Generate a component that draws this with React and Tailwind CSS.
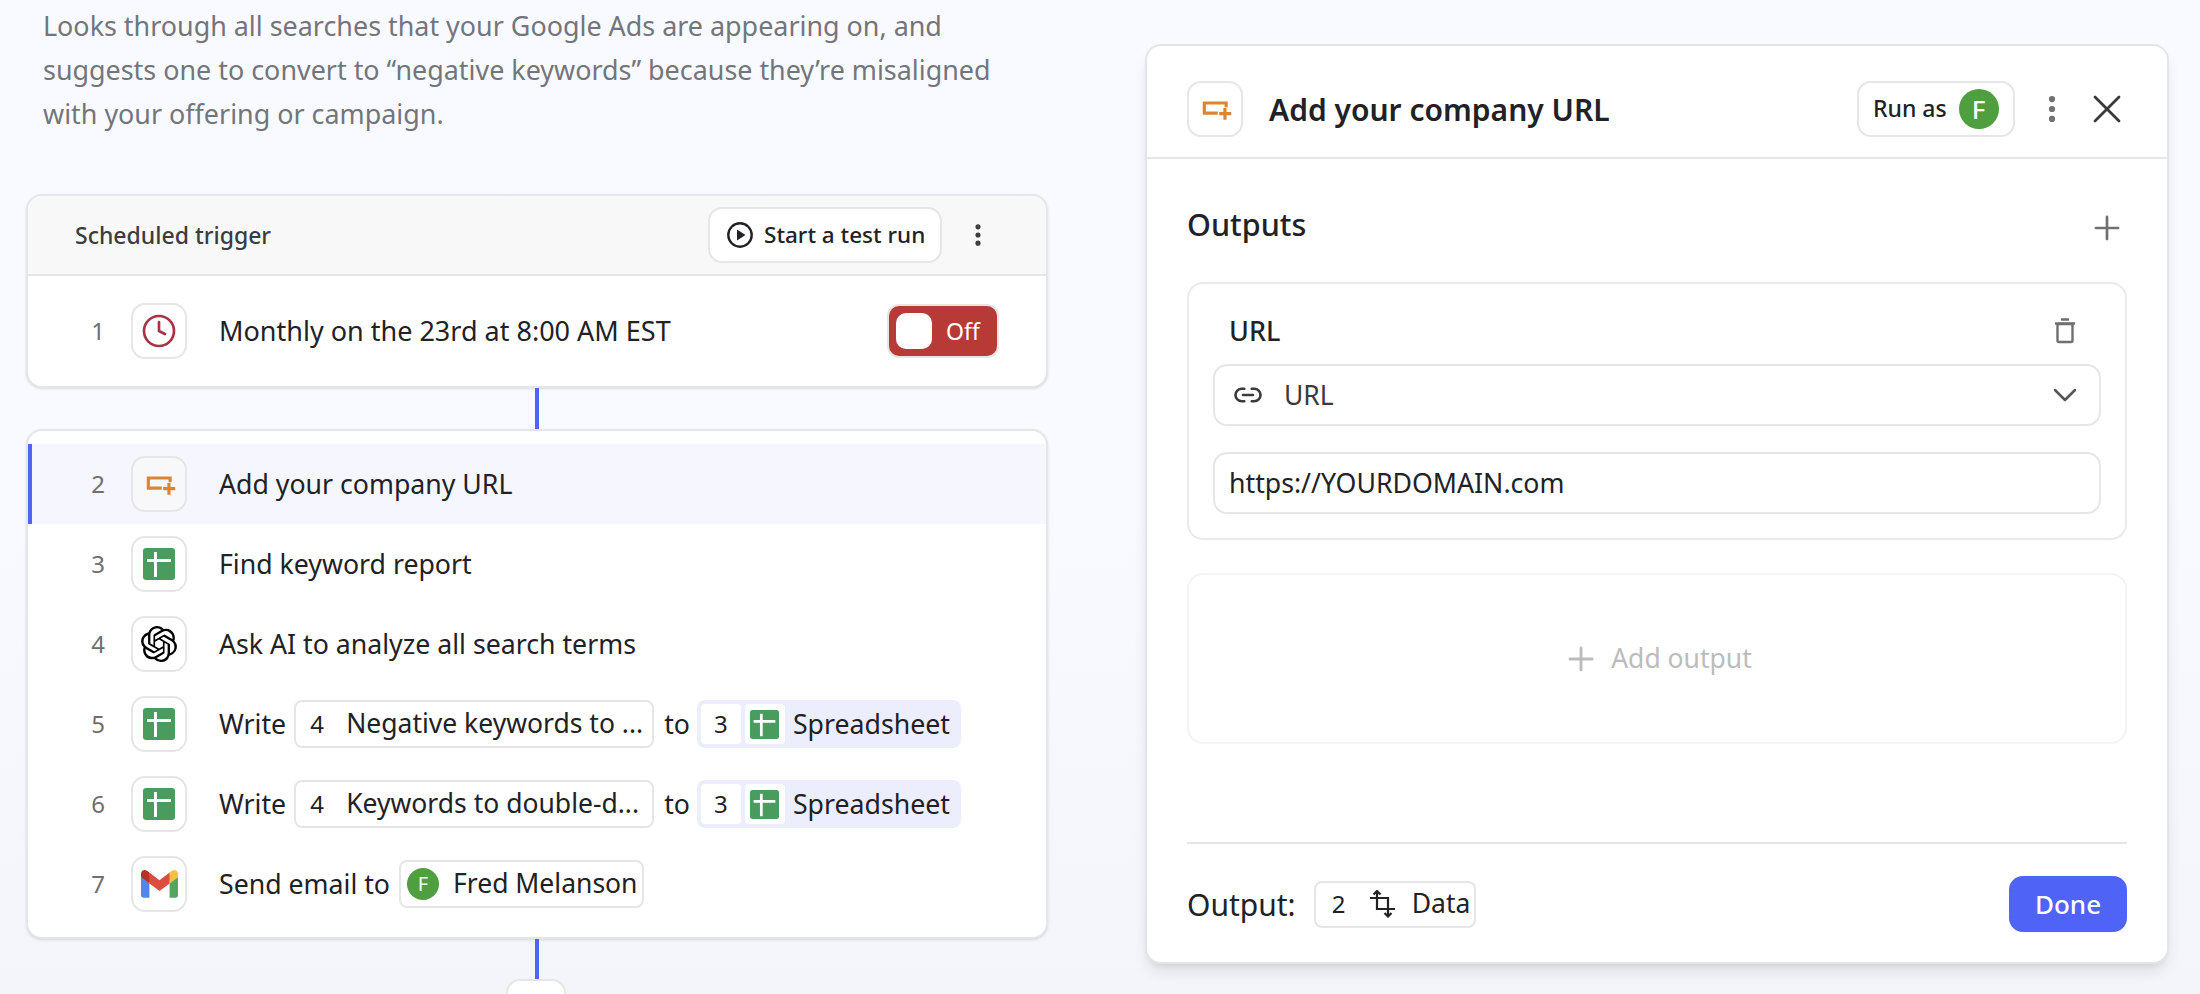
import { Clock, EllipsisVertical, X, Plus, Link2, ChevronDown } from 'lucide-react';
import { SiOpenai } from 'react-icons/si';

const AddIcon = () => (
  <svg viewBox="0 0 56 56" className="w-full h-full" fill="none" stroke="#de8431" strokeWidth="3.4">
    <path d="M31 32.5H16.5V21.5H40V26" />
    <path d="M32.5 33H45.5M38.7 27V39.5" />
  </svg>
);

const SheetIcon = ({ size = 'w-8 h-8' }) => (
  <svg viewBox="0 0 32 32" className={size}>
    <rect width="32" height="32" rx="3" fill="#4a9c5e" />
    <path d="M4 12.5H28M12.5 4V29" stroke="#fff" strokeWidth="3" fill="none" />
  </svg>
);

const GmailIcon = () => (
  <svg viewBox="0 0 256 193" className="w-[37px] h-[28px]">
    <path fill="#5086f0" d="M58.182 192.05V93.14L27.507 65.077 0 49.504v125.091c0 9.658 7.825 17.455 17.455 17.455h40.727Z" />
    <path fill="#55a45f" d="M197.818 192.05h40.727c9.659 0 17.455-7.826 17.455-17.455V49.505l-31.156 17.837-27.026 25.798v98.91Z" />
    <path fill="#dc4d3f" d="m58.182 93.14-4.174-38.647 4.174-36.989L128 69.868l69.818-52.364 4.669 34.992-4.669 40.644L128 145.504z" />
    <path fill="#f4c142" d="M197.818 17.504V93.14L256 49.504V26.231c0-21.585-24.64-33.89-41.89-20.945l-16.292 12.218Z" />
    <path fill="#b83028" d="M0 49.504l26.759 20.07L58.182 93.14V17.504L41.89 5.286C24.61-7.66 0 4.646 0 26.23v23.273Z" />
  </svg>
);

const DataIcon = () => (
  <svg viewBox="0 0 26 28" className="w-[26px] h-[28px]" fill="none" stroke="#222" strokeWidth="2.2">
    <path d="M0 8H18V26M14.5 23L18 26.5L21.5 23" />
    <path d="M7 1V19H25M3.5 4.5L7 1L10.5 4.5" />
  </svg>
);

const PlayIcon = () => (
  <svg viewBox="0 0 28 28" className="w-7 h-7" fill="none">
    <circle cx="14" cy="14" r="11.7" stroke="#212126" strokeWidth="2.4" />
    <path d="M11 8.5L19.5 14L11 19.5Z" fill="#212126" />
  </svg>
);

const TrashIcon = () => (
  <svg viewBox="0 0 22 26" className="w-[22px] h-[26px]" fill="none" stroke="#6f6f6f" strokeWidth="2.4">
    <path d="M1 5.5H21M7 1.5H15" />
    <rect x="3.5" y="6" width="15" height="18" rx="1.5" />
  </svg>
);

const IconBox = ({ children, className = 'bg-white' }) => (
  <div className={`w-14 h-14 rounded-[14px] border-2 border-[#e6e6e6] flex items-center justify-center shrink-0 ${className}`}>
    {children}
  </div>
);

const Step = ({ num, icon, active, boxClass, children }) => (
  <div className={`h-20 flex items-center border-l-4 ${active ? 'border-[#4f63f6] bg-[#f5f6fe]' : 'border-transparent'}`}>
    <span className="w-[73px] text-right text-[#6f6f6f] text-[24px] shrink-0">{num}</span>
    <div className="ml-[26px]">
      <IconBox className={boxClass}>{icon}</IconBox>
    </div>
    <div className="ml-[32px] flex items-center text-[#212126] text-[26.7px] whitespace-nowrap">{children}</div>
  </div>
);

const Chip = ({ num, children }) => (
  <span className="h-12 w-[360px] ml-[8px] rounded-[8px] border-2 border-[#e6e6e6] bg-white flex items-center pl-[14px] text-[26.5px]">
    <span className="w-[36px] text-[24px]">{num}</span>
    {children}
  </span>
);

const SheetChip = () => (
  <span className="ml-[7px] w-[264px] h-12 rounded-[8px] bg-[#eceefd] flex items-center pl-1 gap-1">
    <span className="w-10 h-10 bg-white rounded-[4px] flex items-center justify-center text-[24px]">3</span>
    <span className="w-10 h-10 bg-white rounded-[4px] flex items-center justify-center">
      <SheetIcon size="w-[29px] h-[29px]" />
    </span>
    <span className="ml-[4px]">Spreadsheet</span>
  </span>
);

export default function App() {
  return (
    <div
      className="w-[2200px] h-[994px] overflow-hidden flex bg-gradient-to-b from-[#f9faff] via-[#f9faff] to-[#f4f5fa] text-[#212126]"
      style={{ fontFamily: '"Noto Sans", sans-serif' }}
    >
      {/* left column */}
      <div className="w-[1120px] shrink-0 pl-[26px] pt-[4px]">
        <p className="w-[1000px] ml-[17px] text-[26.9px] leading-[44px] text-[#73757c]">
          Looks through all searches that your Google Ads are appearing on, and<br />
          suggests one to convert to “negative keywords” because they’re misaligned<br />
          with your offering or campaign.
        </p>

        <div className="mt-[58px] w-[1022px] rounded-[16px] border-2 border-[#e6e6e8] bg-white shadow-sm overflow-hidden">
          <div className="h-[80px] bg-[#f8f8f9] border-b-2 border-[#e6e6e8] flex items-center pl-[47px]">
            <span className="text-[23px] font-medium text-[#3c3c40]">Scheduled trigger</span>
            <button className="ml-auto w-[234px] h-[56px] rounded-[14px] border-2 border-[#e6e6e6] bg-white flex items-center pl-[16px] gap-[10px] text-[22.5px] font-medium">
              <PlayIcon />
              Start a test run
            </button>
            <EllipsisVertical size={28} strokeWidth={2.4} className="ml-[22px] mr-[54px] text-[#3c3c40]" />
          </div>
          <div className="h-[110px] flex items-center border-l-4 border-transparent">
            <span className="w-[73px] text-right text-[#6f6f6f] text-[24px] shrink-0">1</span>
            <div className="ml-[26px]">
              <IconBox><Clock size={36} strokeWidth={1.8} className="text-[#a83246]" /></IconBox>
            </div>
            <span className="ml-[32px] text-[27px]">Monthly on the 23rd at 8:00 AM EST</span>
            <div className="ml-auto mr-[47px] w-[112px] h-[54px] rounded-[12px] bg-[#b83a36] border-2 border-[#e6e6e6] flex items-center pl-[7px] text-white text-[23px]">
              <span className="w-[36px] h-[36px] rounded-[10px] bg-white" />
              <span className="ml-[14px]">Off</span>
            </div>
          </div>
        </div>

        <div className="ml-[509px] w-1 h-[41px] bg-[#4f63f6]" />

        <div className="w-[1022px] h-[510px] rounded-[16px] border-2 border-[#e6e6e8] bg-white shadow-sm pt-[13px] overflow-hidden">
          <Step num="2" active boxClass="bg-[#f8f8fb]" icon={<AddIcon />}>Add your company URL</Step>
          <Step num="3" icon={<SheetIcon />}>Find keyword report</Step>
          <Step num="4" icon={<SiOpenai size={36} color="#000" />}>Ask AI to analyze all search terms</Step>
          <Step num="5" icon={<SheetIcon />}>
            Write
            <Chip num="4">Negative keywords to ...</Chip>
            <span className="ml-[10px]">to</span>
            <SheetChip />
          </Step>
          <Step num="6" icon={<SheetIcon />}>
            Write
            <Chip num="4">Keywords to double-d...</Chip>
            <span className="ml-[10px]">to</span>
            <SheetChip />
          </Step>
          <Step num="7" icon={<GmailIcon />}>
            Send email to
            <span className="ml-[9px] w-[245px] h-12 rounded-[8px] border-2 border-[#e6e6e6] flex items-center pl-[6px] gap-[14px] text-[26.5px]">
              <span className="w-[32px] h-[32px] rounded-full bg-[#4f9e3f] text-white flex items-center justify-center text-[20px] leading-none">F</span>
              Fred Melanson
            </span>
          </Step>
        </div>

        <div className="ml-[509px] w-1 h-[40px] bg-[#4f63f6]" />
        <div className="ml-[480px] w-[60px] h-[40px] rounded-[14px] border-2 border-[#e6e6e6] bg-white" />
      </div>

      {/* right panel */}
      <div className="ml-[25px] mt-[44px] w-[1024px] h-[920px] rounded-[16px] border-2 border-[#e4e5e9] bg-white shadow-lg shrink-0 flex flex-col">
        <div className="h-[113px] border-b-2 border-[#e6e6e8] flex items-center pl-[40px] pt-[14px] shrink-0">
          <IconBox><AddIcon /></IconBox>
          <span className="ml-[26px] text-[30px] font-semibold leading-none pt-[2px]">Add your company URL</span>
          <div className="ml-auto w-[158px] h-[56px] rounded-[14px] border-2 border-[#e6e6e6] flex items-center pl-[14px] gap-[12px] text-[23px] font-medium">
            Run as
            <span className="w-10 h-10 rounded-full bg-[#4f9e3f] text-white flex items-center justify-center text-[26px] leading-none">F</span>
          </div>
          <EllipsisVertical size={34} strokeWidth={2.4} className="ml-[20px] text-[#707070]" />
          <X size={48} strokeWidth={1.4} className="ml-[14px] mr-[36px] text-[#3a3a3a]" />
        </div>

        <div className="px-[40px] flex-1 flex flex-col">
          <div className="flex items-center justify-between mt-[46px] h-[40px]">
            <span className="text-[30.5px] font-medium">Outputs</span>
            <Plus size={38} strokeWidth={1.7} className="mt-[6px] mr-[1px] text-[#707070]" />
          </div>

          <div className="mt-[37px] h-[258px] rounded-[16px] border-2 border-[#e9e9ee] px-[24px]">
            <div className="h-[80px] flex items-center justify-between pl-[16px] pr-[25px] pt-[14px]">
              <span className="text-[27px] font-medium">URL</span>
              <TrashIcon />
            </div>
            <div className="h-[62px] rounded-[14px] border-2 border-[#e6e6e8] flex items-center pl-[18px] pr-[14px] text-[26.5px] text-[#3a3a3a]">
              <Link2 size={30} strokeWidth={2.1} />
              <span className="ml-[21px] pt-[2px]">URL</span>
              <ChevronDown size={40} strokeWidth={1.5} className="ml-auto text-[#555]" />
            </div>
            <div className="mt-[26px] h-[62px] rounded-[14px] border-2 border-[#e6e6e8] flex items-center pl-[14px] text-[26.7px]">
              https://YOURDOMAIN.com
            </div>
          </div>

          <div className="mt-[33px] h-[171px] rounded-[16px] border-2 border-[#f4f4f6] flex items-center justify-center gap-[11px] text-[26.5px] text-[#bcbcbc]">
            <Plus size={38} strokeWidth={1.8} />
            Add output
          </div>

          <div className="mt-[98px] border-t-2 border-[#e6e6e8] flex items-center h-[117px] pt-[5px]">
            <span className="text-[30px]">Output:</span>
            <span className="ml-[18px] w-[162px] h-[47px] rounded-[8px] border-2 border-[#e6e6e6] flex items-center pl-[16px] text-[24px]">
              <span className="w-[38px]">2</span>
              <DataIcon />
              <span className="ml-[16px] text-[26.5px]">Data</span>
            </span>
            <button className="ml-auto w-[118px] h-[56px] rounded-[14px] bg-[#4f63f6] text-white text-[26px] font-medium">Done</button>
          </div>
        </div>
      </div>
    </div>
  );
}
